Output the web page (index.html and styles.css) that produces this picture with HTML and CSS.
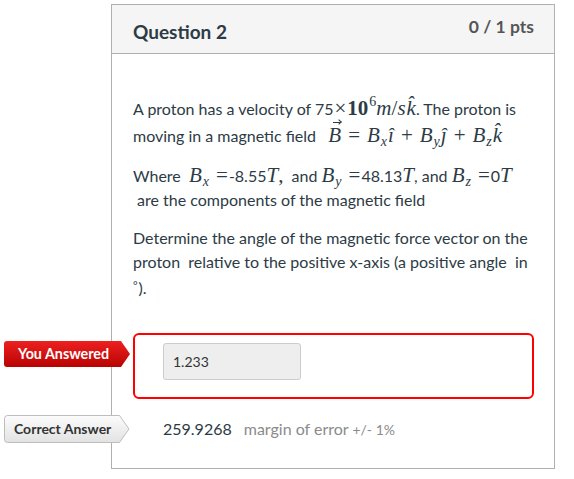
FILE: index.html
```html
<!DOCTYPE html>
<html>
<head>
<meta charset="utf-8">
<link rel="stylesheet" href="styles.css">
</head>
<body>
<div class="question">
  <div class="q-header">
    <span class="q-title">Question 2</span>
    <span class="q-pts">0 / 1 pts</span>
  </div>
  <div class="q-body">
    <p class="tall">A proton has a velocity of 75<span class="m"><span class="times">×</span><span class="ten">10</span><sup>6</sup><i>m</i>/<i>s</i><i class="hat">k̂</i></span>. The proton is moving in a magnetic field &nbsp; <span class="m"><i class="vec">B</i><span class="op">=</span><i>B</i><sub><i>x</i></sub><i class="hat">î</i><span class="op">+</span><i>B</i><sub><i>y</i></sub><i class="hat">ĵ</i><span class="op">+</span><i>B</i><sub><i>z</i></sub><i class="hat">k̂</i></span></p>
    <p>Where &nbsp;<span class="m"><i>B</i><sub><i>x</i></sub><span class="eq">=</span></span>-8.55<span class="m"><i>T</i>,</span>&nbsp; and <span class="m"><i>B</i><sub><i>y</i></sub><span class="eq">=</span></span>48.13<span class="m"><i>T</i></span>, and <span class="m"><i>B</i><sub><i>z</i></sub><span class="eq">=</span></span>0<span class="m"><i>T</i></span><br>&nbsp;are the components of the magnetic field</p>
    <p>Determine the angle of the magnetic force vector on the proton &nbsp;relative to the positive x-axis (a positive angle &nbsp;in <span class="deg">°</span>).</p>
  </div>
  <div class="answers">
    <div class="ans-row wrong">
      <div class="badge badge-red">
        <svg width="127" height="26" viewBox="0 0 127 26"><defs><linearGradient id="gr" x1="0" y1="0" x2="0" y2="1"><stop offset="0" stop-color="#ee2020"/><stop offset="1" stop-color="#b80303"/></linearGradient></defs><path d="M3 0H117L126 13L117 26H3Q0 26 0 23V3Q0 0 3 0Z" fill="url(#gr)"/></svg>
        <span>You Answered</span>
      </div>
      <div class="ans-box"><div class="ans-input">1.233</div></div>
    </div>
    <div class="ans-row correct">
      <div class="badge badge-gray">
        <svg width="126" height="28" viewBox="0 0 126 28"><defs><linearGradient id="gg" x1="0" y1="0" x2="0" y2="1"><stop offset="0" stop-color="#fcfcfc"/><stop offset="1" stop-color="#e2e2e2"/></linearGradient></defs><path d="M3.5 0.5H115.5L125 14L115.5 27.5H3.5Q0.5 27.5 0.5 24.5V3.5Q0.5 0.5 3.5 0.5Z" fill="url(#gg)" stroke="#bdbdbd"/></svg>
        <span>Correct Answer</span>
      </div>
      <div class="correct-text"><span class="val">259.9268</span><span class="margin">margin of error <small>+/- 1%</small></span></div>
    </div>
  </div>
</div>
</body>
</html>
```

FILE: styles.css
```css
html, body {
  margin: 0;
  padding: 0;
  background: #fff;
}
body {
  font-family: Lato, "Open Sans", sans-serif;
  color: #2d3b45;
  padding-top: 4px;
}
.question {
  margin-left: 111px;
  width: 444px;
  box-sizing: border-box;
  border: 1px solid #b0b0b0;
  height: 465px;
}
.q-header {
  height: 48px;
  background: #f5f5f5;
  border-bottom: 1px solid #b0b0b0;
  display: flex;
  justify-content: space-between;
  padding: 0 20px 0 21px;
}
.q-title {
  font-weight: 700;
  font-size: 19px;
  padding-top: 15px;
}
.q-pts {
  font-weight: 700;
  font-size: 17.5px;
  color: #555;
  padding-top: 11px;
}
.q-body {
  padding: 41px 16px 0 21px;
  font-size: 16px;
  line-height: 24px;
}
.q-body p {
  margin: 0 0 14px 0;
}
.q-body p.tall {
  line-height: 27px;
  margin-bottom: 15px;
}
.m {
  font-family: "Liberation Serif", "DejaVu Serif", serif;
  font-size: 21px;
  line-height: 0;
}
.m i { font-style: italic; }
.m sub, .m sup {
  font-size: 14px;
  line-height: 0;
}
.m sub { vertical-align: -4px; margin-left: 1px; }
.m sup { vertical-align: 9px; margin-left: 1px; }
.times { margin: 0 1px; }
.ten { font-weight: 700; }
.op { margin: 0 7px; }
.eq { margin: 0 1px 0 7px; }
.hat { margin-left: 1px; }
.vec {
  position: relative;
  display: inline-block;
  line-height: 1;
}
.vec::before {
  content: "";
  position: absolute;
  left: 5px;
  top: -3px;
  width: 7px;
  border-top: 1.5px solid #2d3b45;
}
.vec::after {
  content: "";
  position: absolute;
  left: 9px;
  top: -5px;
  width: 3px;
  height: 3px;
  border-top: 1.5px solid #2d3b45;
  border-right: 1.5px solid #2d3b45;
  transform: rotate(45deg);
}
.deg {
  font-size: 11px;
  vertical-align: 4px;
  margin-right: 1px;
}
.answers {
  position: relative;
  padding: 19px 0 0 21px;
}
.ans-row {
  position: relative;
}
.badge {
  position: absolute;
  left: -129px;
}
.badge svg {
  display: block;
}
.badge span {
  position: absolute;
  top: 0;
  left: 0;
  font-weight: 700;
  font-size: 14.3px;
  white-space: nowrap;
}
.badge-red { top: 8px; }
.badge-red span {
  color: #fff;
  left: 14px;
  line-height: 26px;
}
.badge-gray { top: 2px; }
.badge-gray span {
  color: #333;
  left: 10px;
  line-height: 28px;
  font-size: 14px;
}
.ans-box {
  width: 401px;
  height: 66px;
  box-sizing: border-box;
  border: 2px solid #f00;
  border-radius: 6px;
  padding: 8px 0 0 28px;
}
.ans-input {
  width: 138px;
  height: 37px;
  box-sizing: border-box;
  background: #eee;
  border: 1px solid #ccc;
  border-radius: 3px;
  font-size: 14px;
  line-height: 35px;
  padding-left: 9px;
  color: #333;
}
.correct {
  margin-top: 14px;
  padding-left: 30px;
  height: 32px;
}
.correct-text {
  line-height: 32px;
  font-size: 16px;
}
.val {
  color: #2d3b45;
  margin-right: 12px;
}
.margin {
  color: #8b8b8b;
}
.margin small {
  font-size: 14px;
}
```
